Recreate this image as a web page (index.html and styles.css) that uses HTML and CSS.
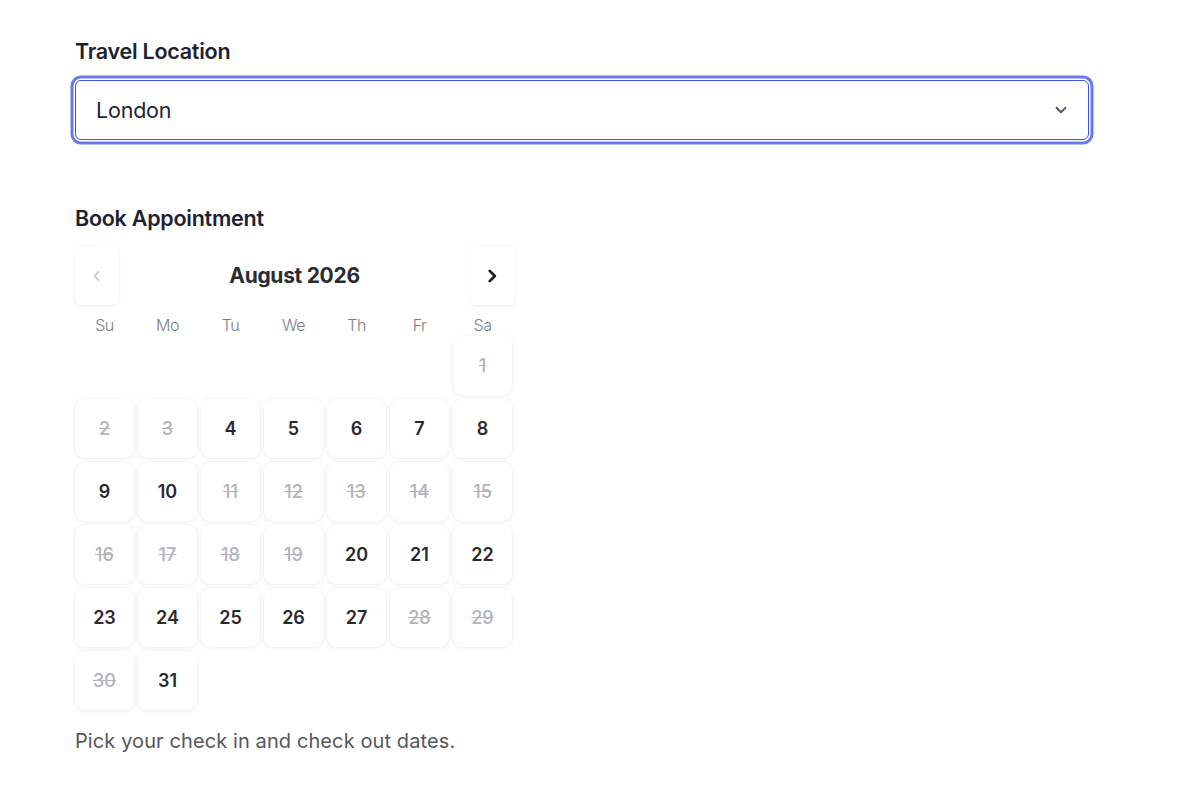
FILE: index.html
```html
<!DOCTYPE html>
<html lang="en">
<head>
<meta charset="utf-8">
<title>Booking</title>
<link rel="stylesheet" href="styles.css">
</head>
<body>
<main class="page">
  <label class="field-label">Travel Location</label>
  <div class="select">
    <span class="select-value">London</span>
    <svg class="select-chevron" width="18" height="18" viewBox="0 0 20 20" fill="none"><path d="M5 7.5l5 5 5-5" stroke="#4b5563" stroke-width="2" stroke-linecap="round" stroke-linejoin="round"/></svg>
  </div>

  <h2 class="field-label book-label">Book Appointment</h2>
  <div class="calendar">
    <div class="cal-head">
      <button class="nav-btn prev" aria-label="Previous month">
        <svg width="14" height="14" viewBox="0 0 14 14" fill="none"><path d="M8.5 3l-4 4 4 4" stroke="#cfcfd4" stroke-width="2" stroke-linecap="round" stroke-linejoin="round"/></svg>
      </button>
      <div class="cal-title">August 2026</div>
      <button class="nav-btn next" aria-label="Next month">
        <svg width="16" height="16" viewBox="0 0 14 14" fill="none"><path d="M5 2.5l4.5 4.5-4.5 4.5" stroke="#1f1f24" stroke-width="2.4" stroke-linecap="round" stroke-linejoin="round"/></svg>
      </button>
    </div>
    <div class="weekdays">
      <span>Su</span><span>Mo</span><span>Tu</span><span>We</span><span>Th</span><span>Fr</span><span>Sa</span>
    </div>
    <div class="days">
      <span class="blank"></span><span class="blank"></span><span class="blank"></span><span class="blank"></span><span class="blank"></span><span class="blank"></span>
      <span class="day off">1</span>
      <span class="day off">2</span><span class="day off">3</span><span class="day">4</span><span class="day">5</span><span class="day">6</span><span class="day">7</span><span class="day">8</span>
      <span class="day">9</span><span class="day">10</span><span class="day off">11</span><span class="day off">12</span><span class="day off">13</span><span class="day off">14</span><span class="day off">15</span>
      <span class="day off">16</span><span class="day off">17</span><span class="day off">18</span><span class="day off">19</span><span class="day">20</span><span class="day">21</span><span class="day">22</span>
      <span class="day">23</span><span class="day">24</span><span class="day">25</span><span class="day">26</span><span class="day">27</span><span class="day off">28</span><span class="day off">29</span>
      <span class="day off">30</span><span class="day">31</span>
    </div>
  </div>
  <p class="help">Pick your check in and check out dates.</p>
</main>
</body>
</html>
```

FILE: styles.css
```css
* { box-sizing: border-box; }
html, body { margin: 0; padding: 0; background: #fff; }
body {
  font-family: "Inter", "Noto Sans", "Liberation Sans", sans-serif;
  color: #1f2433;
}
.page {
  padding: 38px 0 0 75px;
  width: 1089px;
}
.field-label {
  display: block;
  margin: 0;
  font-size: 21.5px;
  line-height: 26px;
  font-weight: 600;
  letter-spacing: -0.25px;
  color: #1d2232;
}
.select {
  margin-top: 16px;
  height: 60px;
  border: 1px solid #3f52e2;
  border-radius: 6px;
  box-shadow: 0 0 0 1.5px #ffffff, 0 0 0 4.5px #6679ee;
  display: flex;
  align-items: center;
  justify-content: space-between;
  padding: 0 18px 0 20px;
  background: #fff;
}
.select-value {
  font-size: 21.5px;
  color: #1f2433;
  letter-spacing: -0.2px;
}
.select-chevron { display: block; }
.book-label {
  margin-top: 65px;
}
.calendar {
  width: 440px;
  margin-top: 15px;
}
.cal-head {
  height: 59px;
  display: flex;
  align-items: center;
  justify-content: space-between;
}
.nav-btn {
  height: 59px;
  width: 44px;
  border: none;
  background: #fff;
  border-radius: 6px;
  box-shadow: 0 1px 3px rgba(30, 30, 60, 0.06), 0 0 0 1px rgba(0, 0, 0, 0.02);
  display: flex;
  align-items: center;
  justify-content: center;
  padding: 0;
}
.nav-btn.next { width: 45px; }
.cal-title {
  font-size: 21px;
  font-weight: 700;
  color: #2b2b30;
  letter-spacing: -0.3px;
}
.weekdays {
  display: grid;
  grid-template-columns: repeat(7, 59px);
  column-gap: 4px;
  height: 31px;
  padding-top: 10px;
}
.weekdays span {
  text-align: center;
  font-size: 16px;
  line-height: 20px;
  font-weight: 300;
  color: #7d7d84;
  letter-spacing: -0.5px;
}
.days {
  display: grid;
  grid-template-columns: repeat(7, 59px);
  grid-auto-rows: 59px;
  gap: 4px;
}
.day {
  background: #fff;
  border-radius: 9px;
  box-shadow: 0 1px 4px rgba(30, 30, 60, 0.07), 0 0 0 1px rgba(0, 0, 0, 0.015);
  display: flex;
  align-items: center;
  justify-content: center;
  font-size: 18px;
  font-weight: 600;
  color: #2a2a2e;
}
.day.off {
  color: #b3b3b8;
  font-weight: 500;
  text-decoration: line-through;
}
.help {
  margin: 18px 0 0;
  font-size: 20px;
  line-height: 26px;
  color: #56565c;
  letter-spacing: 0.1px;
}
```
